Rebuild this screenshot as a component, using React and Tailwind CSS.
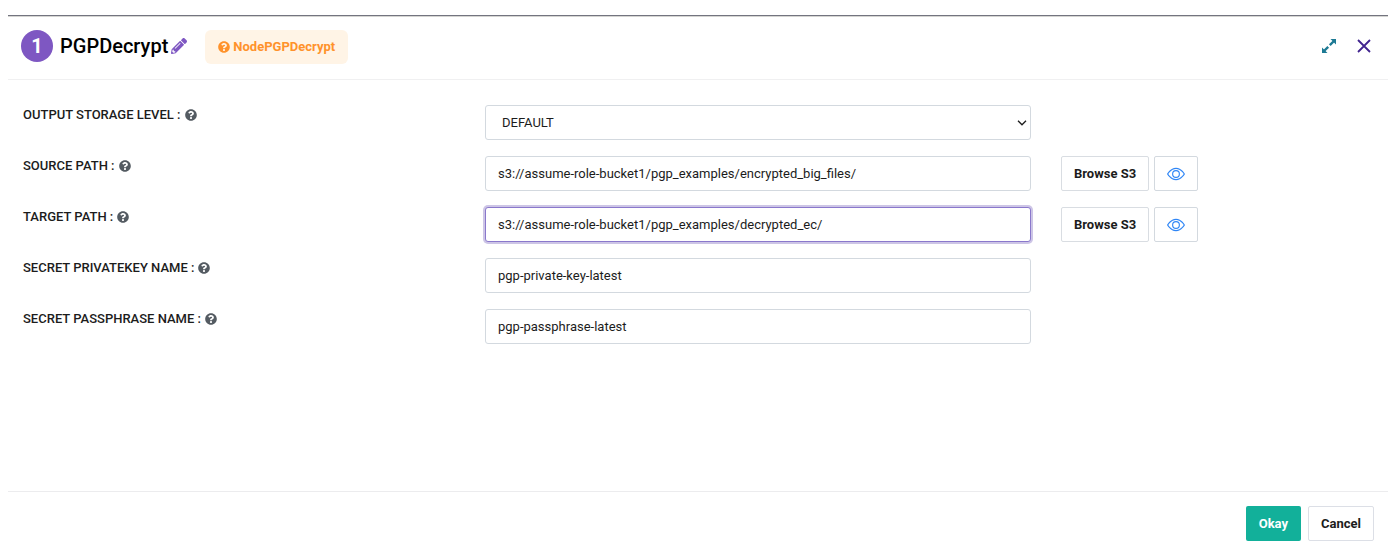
import { FaQuestionCircle, FaPencilAlt } from "react-icons/fa";
import { BsEye } from "react-icons/bs";

const fields = [
  { id: "storage", label: "OUTPUT STORAGE LEVEL :", type: "select", value: "DEFAULT" },
  { id: "source", label: "SOURCE PATH :", value: "s3://assume-role-bucket1/pgp_examples/encrypted_big_files/", browse: true },
  { id: "target", label: "TARGET PATH :", value: "s3://assume-role-bucket1/pgp_examples/decrypted_ec/", browse: true, active: true },
  { id: "key", label: "SECRET PRIVATEKEY NAME :", value: "pgp-private-key-latest" },
  { id: "passphrase", label: "SECRET PASSPHRASE NAME :", value: "pgp-passphrase-latest" },
];

const inputBase = "block h-[35px] w-full rounded-[3px] border bg-white px-3 text-[13px] text-[#1c1c1c] outline-none";

function Field({ id, label, type, value, browse, active }) {
  return (
    <div className="grid grid-cols-[432fr_546fr_312fr] gap-x-[30px]">
      <div className="flex h-5 items-center gap-1 text-[13px] font-medium text-[#1c1c1c]">
        <label htmlFor={id}>{label}</label>
        <FaQuestionCircle className="size-3 text-[#545b62]" />
      </div>
      {type === "select" ? (
        <div className="relative">
          <select id={id} defaultValue={value} className={`${inputBase} appearance-none border-[#d3d9df] pl-4`}>
            <option>{value}</option>
          </select>
          <svg viewBox="0 0 10 6" className="pointer-events-none absolute top-[15px] right-1 h-[6px] w-[10px]" fill="none" stroke="#1c1c1c" strokeWidth="1.3">
            <path d="M1 0.8 5 4.8 9 0.8" />
          </svg>
        </div>
      ) : (
        <input
          id={id}
          type="text"
          defaultValue={value}
          className={`${inputBase} ${active ? "border-[#8a78cc] ring-2 ring-[#cdc5e6]" : "border-[#d3d9df]"}`}
        />
      )}
      {browse ? (
        <div className="flex gap-[5px]">
          <button type="button" className="h-[35px] rounded-[2px] border border-[#d9dde2] px-3 text-[13px] font-bold text-[#1c1c1c]">
            Browse S3
          </button>
          <button type="button" aria-label="Preview" className="flex h-[35px] w-[44px] items-center justify-center rounded-[2px] border border-[#d3d9df]">
            <BsEye className="size-[18px] text-[#2f86f6]" />
          </button>
        </div>
      ) : null}
    </div>
  );
}

export default function App() {
  return (
    <div className="min-h-screen bg-white px-2 pt-[15px] font-['Roboto',sans-serif]">
      <section className="mr-[2px] flex min-h-[541px] flex-col border-t border-[#73747f]">
        <header className="flex h-16 items-start justify-between border-b border-[#f0f0f1] pt-[14px] pr-[17px] pl-[13px] shadow-[inset_0_1px_0_#d5d5d2]">
          <div className="flex items-start">
            <div className="flex h-8 items-center">
              <span className="flex size-8 items-center justify-center rounded-full bg-[#7e57c2] text-xl font-bold text-white">1</span>
              <h1 className="ml-[7px] text-xl font-medium text-black">PGPDecrypt</h1>
              <button type="button" aria-label="Rename" className="ml-[3px]">
                <FaPencilAlt className="size-4 text-[#7e57c2]" />
              </button>
            </div>
            <a href="#help" className="ml-[18px] flex h-[34px] items-center gap-[3px] rounded-md bg-[#fff4e6] px-[13px] text-[13px] font-bold text-[#ff922b]">
              <FaQuestionCircle className="size-3" />
              NodePGPDecrypt
            </a>
          </div>
          <div className="flex h-8 items-center gap-5">
            <button type="button" aria-label="Expand">
              <svg viewBox="0 0 16 16" className="size-4" fill="#1d7a94" stroke="#1d7a94">
                <path d="M9.500 1H15v5.500zM1 9.500V15h5.500z" stroke="none" />
                <path d="M13 3 8.800 7.200M7.200 8.800 3 13" strokeWidth="2.400" />
              </svg>
            </button>
            <button type="button" aria-label="Close">
              <svg viewBox="0 0 14 14" className="size-[14px]" fill="none" stroke="#41248f" strokeWidth="1.800">
                <path d="M1 1 13 13M13 1 1 13" />
              </svg>
            </button>
          </div>
        </header>
        <main className="flex flex-1 flex-col gap-4 px-[15px] pt-[25px] pb-4">
          {fields.map((f) => (
            <Field key={f.id} {...f} />
          ))}
        </main>
        <footer className="flex h-[65px] justify-end gap-[7px] border-t border-[#ececee] pt-[14px] pr-[14px]">
          <button type="button" className="h-[35px] rounded-[2px] bg-[#12b09a] px-[13px] text-[13px] font-bold text-white">Okay</button>
          <button type="button" className="h-[35px] rounded-[2px] border border-[#dcdfe6] px-3 text-[13px] font-bold text-[#1c1c1c]">Cancel</button>
        </footer>
      </section>
    </div>
  );
}
